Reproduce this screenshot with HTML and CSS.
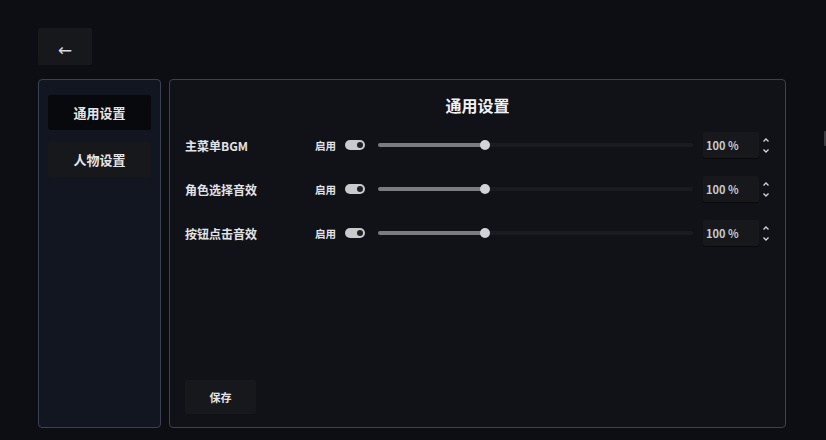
FILE: index.html
```html
<!DOCTYPE html>
<html lang="zh-CN">
<head>
  <meta charset="UTF-8">
  <meta name="viewport" content="width=device-width, initial-scale=1.0">
  <title>设置</title>
  <link rel="stylesheet" href="styles.css">
</head>
<body>

<div class="page">
  <button class="backBtn">←</button>

  <div class="content">
    <div class="sidebar">
      <div class="navItem active">通用设置</div>
      <div class="navItem">人物设置</div>
    </div>

    <div class="panel">
      <h2 class="panelTitle">通用设置</h2>

      <div class="row">
        <span class="rowLabel">主菜单BGM</span>
        <span class="enableText">启用</span>
        <span class="toggle"><span class="knob"></span></span>
        <div class="slider">
          <div class="fill" style="width: 34%"></div>
          <div class="thumb" style="left: 34%"></div>
        </div>
        <div class="numBox">100 %</div>
        <div class="spin">
          <svg width="8" height="6" viewBox="0 0 8 6"><path d="M1.5 4.5 L4 2 L6.5 4.5" fill="none" stroke="#cfd2d8" stroke-width="1.4"/></svg>
          <svg width="8" height="6" viewBox="0 0 8 6"><path d="M1.5 1.5 L4 4 L6.5 1.5" fill="none" stroke="#cfd2d8" stroke-width="1.4"/></svg>
        </div>
      </div>

      <div class="row">
        <span class="rowLabel">角色选择音效</span>
        <span class="enableText">启用</span>
        <span class="toggle"><span class="knob"></span></span>
        <div class="slider">
          <div class="fill" style="width: 34%"></div>
          <div class="thumb" style="left: 34%"></div>
        </div>
        <div class="numBox">100 %</div>
        <div class="spin">
          <svg width="8" height="6" viewBox="0 0 8 6"><path d="M1.5 4.5 L4 2 L6.5 4.5" fill="none" stroke="#cfd2d8" stroke-width="1.4"/></svg>
          <svg width="8" height="6" viewBox="0 0 8 6"><path d="M1.5 1.5 L4 4 L6.5 1.5" fill="none" stroke="#cfd2d8" stroke-width="1.4"/></svg>
        </div>
      </div>

      <div class="row">
        <span class="rowLabel">按钮点击音效</span>
        <span class="enableText">启用</span>
        <span class="toggle"><span class="knob"></span></span>
        <div class="slider">
          <div class="fill" style="width: 34%"></div>
          <div class="thumb" style="left: 34%"></div>
        </div>
        <div class="numBox">100 %</div>
        <div class="spin">
          <svg width="8" height="6" viewBox="0 0 8 6"><path d="M1.5 4.5 L4 2 L6.5 4.5" fill="none" stroke="#cfd2d8" stroke-width="1.4"/></svg>
          <svg width="8" height="6" viewBox="0 0 8 6"><path d="M1.5 1.5 L4 4 L6.5 1.5" fill="none" stroke="#cfd2d8" stroke-width="1.4"/></svg>
        </div>
      </div>

      <button class="saveBtn">保存</button>
    </div>
  </div>
</div>

<div class="edgeTab"></div>

</body>
</html>
```

FILE: styles.css
```css
html, body {
  margin: 0;
  height: 100%;
  background-color: #0d0e13;
  color: #e8e9ec;
  font-family: "Noto Sans CJK SC", "Noto Sans", sans-serif;
  overflow: hidden;
}
.page {
  box-sizing: border-box;
  height: 440px;
  padding: 28px 40px 12px 38px;
  display: flex;
  flex-direction: column;
}
.backBtn {
  width: 54px;
  height: 37px;
  margin-bottom: 14px;
  padding: 6px 0 0 0;
  border: none;
  border-radius: 2px;
  background-color: #17181b;
  color: #d9dadd;
  font-family: "DejaVu Sans", sans-serif;
  font-size: 17px;
  cursor: pointer;
}
.content {
  flex: 1;
  display: flex;
  gap: 8px;
}
.sidebar {
  width: 123px;
  box-sizing: border-box;
  border: 1.5px solid #3a4153;
  border-radius: 4px;
  background-color: #121620;
  padding: 15px 9px;
  display: flex;
  flex-direction: column;
  gap: 12px;
}
.navItem {
  height: 35px;
  line-height: 35px;
  text-align: center;
  font-size: 13px;
  font-weight: 700;
  color: #e4e5e8;
  background-color: #17181c;
  border-radius: 2px;
}
.navItem.active {
  background-color: #08090c;
}
.panel {
  flex: 1;
  box-sizing: border-box;
  border: 1.5px solid #3a4153;
  border-radius: 4px;
  background-color: #111217;
  padding: 13px 15px 13px 15px;
  display: flex;
  flex-direction: column;
}
.panelTitle {
  margin: 0 0 6px 0;
  text-align: center;
  font-size: 16px;
  font-weight: 700;
  line-height: 24px;
  color: #f0f1f3;
}
.row {
  height: 44px;
  display: flex;
  align-items: center;
}
.rowLabel {
  width: 130px;
  font-size: 12px;
  font-weight: 700;
  color: #e2e3e6;
}
.enableText {
  font-size: 10.5px;
  font-weight: 700;
  color: #e2e3e6;
  margin-right: 9px;
}
.toggle {
  position: relative;
  width: 20px;
  height: 10px;
  border-radius: 5px;
  background-color: #c9cacd;
  margin-right: 13px;
}
.knob {
  position: absolute;
  right: 2px;
  top: 2px;
  width: 6px;
  height: 6px;
  border-radius: 50%;
  background-color: #202126;
}
.slider {
  position: relative;
  flex: 1;
  height: 4px;
  border-radius: 2px;
  background-color: #1a1b20;
  margin-right: 10px;
}
.fill {
  height: 100%;
  border-radius: 2px;
  background-color: #7b7c80;
}
.thumb {
  position: absolute;
  top: -3px;
  width: 10px;
  height: 10px;
  margin-left: -5px;
  border-radius: 50%;
  background-color: #d2d3d6;
}
.numBox {
  width: 56px;
  height: 26px;
  box-sizing: border-box;
  padding-left: 3px;
  line-height: 26px;
  font-size: 11px;
  font-weight: 700;
  color: #c8c9cc;
  background-color: #17181b;
  border-radius: 2px;
  box-shadow: 0 1px 0 #08090b;
}
.spin {
  width: 8px;
  margin-left: 3px;
  display: flex;
  flex-direction: column;
  align-items: center;
  gap: 5px;
}
.spin svg {
  display: block;
}
.saveBtn {
  margin-top: auto;
  width: 71px;
  height: 34px;
  border: none;
  border-radius: 2px;
  background-color: #17181b;
  color: #e2e3e6;
  font-family: "Noto Sans CJK SC", sans-serif;
  font-size: 11px;
  font-weight: 700;
  cursor: pointer;
}
.edgeTab {
  position: absolute;
  right: 0;
  top: 131px;
  width: 2px;
  height: 15px;
  border-radius: 1px 0 0 1px;
  background-color: #3a3b40;
}
```
